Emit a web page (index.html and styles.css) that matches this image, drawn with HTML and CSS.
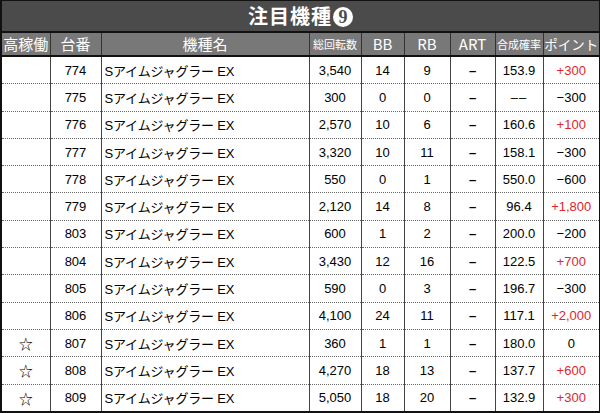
FILE: index.html
```html
<!DOCTYPE html>
<html lang="ja">
<head>
<meta charset="utf-8">
<link rel="stylesheet" href="styles.css">
</head>
<body>
<div class="board">
  <div class="title">注目機種<span class="circ">9</span></div>
  <table class="grid">
    <colgroup>
      <col class="c1"><col class="c2"><col class="c3"><col class="c4"><col class="c5"><col class="c6"><col class="c7"><col class="c8"><col class="c9">
    </colgroup>
    <thead>
      <tr>
        <th>高稼働</th><th>台番</th><th>機種名</th><th class="sm">総回転数</th><th>BB</th><th>RB</th><th>ART</th><th class="sm">合成確率</th><th class="pt">ポイント</th>
      </tr>
    </thead>
    <tbody>
      <tr><td></td><td>774</td><td class="name">Sアイムジャグラー EX</td><td>3,540</td><td>14</td><td>9</td><td class="dash">–</td><td>153.9</td><td class="plus">+300</td></tr>
      <tr><td></td><td>775</td><td class="name">Sアイムジャグラー EX</td><td>300</td><td>0</td><td>0</td><td class="dash">–</td><td class="none">––</td><td>−300</td></tr>
      <tr><td></td><td>776</td><td class="name">Sアイムジャグラー EX</td><td>2,570</td><td>10</td><td>6</td><td class="dash">–</td><td>160.6</td><td class="plus">+100</td></tr>
      <tr><td></td><td>777</td><td class="name">Sアイムジャグラー EX</td><td>3,320</td><td>10</td><td>11</td><td class="dash">–</td><td>158.1</td><td>−300</td></tr>
      <tr><td></td><td>778</td><td class="name">Sアイムジャグラー EX</td><td>550</td><td>0</td><td>1</td><td class="dash">–</td><td>550.0</td><td>−600</td></tr>
      <tr><td></td><td>779</td><td class="name">Sアイムジャグラー EX</td><td>2,120</td><td>14</td><td>8</td><td class="dash">–</td><td>96.4</td><td class="plus">+1,800</td></tr>
      <tr><td></td><td>803</td><td class="name">Sアイムジャグラー EX</td><td>600</td><td>1</td><td>2</td><td class="dash">–</td><td>200.0</td><td>−200</td></tr>
      <tr><td></td><td>804</td><td class="name">Sアイムジャグラー EX</td><td>3,430</td><td>12</td><td>16</td><td class="dash">–</td><td>122.5</td><td class="plus">+700</td></tr>
      <tr><td></td><td>805</td><td class="name">Sアイムジャグラー EX</td><td>590</td><td>0</td><td>3</td><td class="dash">–</td><td>196.7</td><td>−300</td></tr>
      <tr><td></td><td>806</td><td class="name">Sアイムジャグラー EX</td><td>4,100</td><td>24</td><td>11</td><td class="dash">–</td><td>117.1</td><td class="plus">+2,000</td></tr>
      <tr><td>☆</td><td>807</td><td class="name">Sアイムジャグラー EX</td><td>360</td><td>1</td><td>1</td><td class="dash">–</td><td>180.0</td><td>0</td></tr>
      <tr><td>☆</td><td>808</td><td class="name">Sアイムジャグラー EX</td><td>4,270</td><td>18</td><td>13</td><td class="dash">–</td><td>137.7</td><td class="plus">+600</td></tr>
      <tr><td>☆</td><td>809</td><td class="name">Sアイムジャグラー EX</td><td>5,050</td><td>18</td><td>20</td><td class="dash">–</td><td>132.9</td><td class="plus">+300</td></tr>
    </tbody>
  </table>
</div>
</body>
</html>
```
FILE: styles.css
```css
html, body {
  margin: 0;
  padding: 0;
  background: #fff;
}
body {
  width: 600px;
  height: 413px;
  overflow: hidden;
  font-family: "Liberation Sans", "Noto Sans CJK JP", sans-serif;
  color: #000;
}
.board {
  width: 600px;
  box-sizing: border-box;
  border: 1px solid #111;
  border-left-width: 2px;
  border-bottom-width: 2px;
}
.title {
  height: 30px;
  background: #4b4b4b;
  color: #fff;
  font-family: "Noto Sans CJK JP", sans-serif;
  font-weight: 700;
  font-size: 20px;
  line-height: 30px;
  text-align: center;
  border-bottom: 2px solid #111;
  letter-spacing: 1px;
}
.circ {
  display: inline-block;
  width: 20px;
  height: 20px;
  border-radius: 50%;
  background: #fff;
  color: #4b4b4b;
  font-family: "Liberation Serif", serif;
  font-size: 18px;
  line-height: 21px;
  font-weight: 700;
  text-align: center;
  vertical-align: 1px;
  margin-left: 1px;
  letter-spacing: 0;
}
.grid {
  width: 100%;
  border-collapse: collapse;
  table-layout: fixed;
}
.c1 { width: 48px; }
.c2 { width: 51px; }
.c3 { width: 208px; }
.c4 { width: 52px; }
.c5 { width: 43px; }
.c6 { width: 46px; }
.c7 { width: 45px; }
.c8 { width: 48px; }
.c9 { width: auto; }
th {
  background: #787878;
  color: #fff;
  height: 22px;
  padding: 0;
  font-weight: 400;
  font-size: 15px;
  font-family: "Noto Sans CJK JP", sans-serif;
  border-left: 1px solid #333;
  border-bottom: 2px solid #111;
  line-height: 22px;
  white-space: nowrap;
  overflow: hidden;
}
th:first-child { border-left: none; }
th.sm { font-size: 11px; }
th.pt { font-size: 13.5px; }
td {
  height: 26.3px;
  padding: 0;
  text-align: center;
  font-size: 13px;
  border-left: 1px solid #444;
  border-bottom: 1px dotted #666;
  white-space: nowrap;
  overflow: hidden;
}
td:first-child { border-left: none; font-size: 14px; }
tbody tr:last-child td { border-bottom: none; }
td.name {
  text-align: left;
  padding-left: 3px;
  letter-spacing: -0.2px;
}
td.dash { font-weight: 700; }
td.none { letter-spacing: 1px; }
td.plus { color: #e0262c; }
```
